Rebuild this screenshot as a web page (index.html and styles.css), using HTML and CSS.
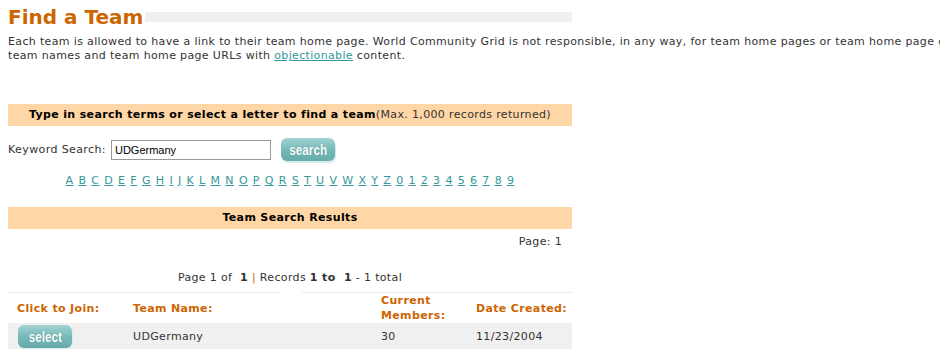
FILE: index.html
```html
<!DOCTYPE html>
<html lang="en">
<head>
  <meta charset="UTF-8">
  <title>Find a Team</title>
  <link rel="stylesheet" href="styles.css">
</head>
<body>
  <div class="page">
    <div class="title-row">
      <h1>Find a Team</h1>
      <div class="title-bar"></div>
    </div>
    <p class="intro">Each team is allowed to have a link to their team home page. World Community Grid is not responsible, in any way, for team home pages or team home page content. We reserve the right to remove<br>team names and team home page URLs with <a href="#">objectionable</a> content.</p>

    <div class="panel">
      <div class="bar"><b>Type in search terms or select a letter to find a team</b>(Max. 1,000 records returned)</div>
      <div class="search-row">
        <label for="kw">Keyword Search:</label>
        <input type="text" id="kw" value="UDGermany">
        <button class="pill"><span>search</span></button>
      </div>
      <div class="letters">
        <a href="#">A</a> <a href="#">B</a> <a href="#">C</a> <a href="#">D</a> <a href="#">E</a> <a href="#">F</a> <a href="#">G</a> <a href="#">H</a> <a href="#">I</a> <a href="#">J</a> <a href="#">K</a> <a href="#">L</a> <a href="#">M</a> <a href="#">N</a> <a href="#">O</a> <a href="#">P</a> <a href="#">Q</a> <a href="#">R</a> <a href="#">S</a> <a href="#">T</a> <a href="#">U</a> <a href="#">V</a> <a href="#">W</a> <a href="#">X</a> <a href="#">Y</a> <a href="#">Z</a> <a href="#">0</a> <a href="#">1</a> <a href="#">2</a> <a href="#">3</a> <a href="#">4</a> <a href="#">5</a> <a href="#">6</a> <a href="#">7</a> <a href="#">8</a> <a href="#">9</a>
      </div>

      <div class="bar results-bar"><b>Team Search Results</b></div>
      <div class="page-no">Page: 1</div>
      <div class="paging">Page 1 of &nbsp;<b>1</b> <span class="sep">|</span> Records <b>1 to &nbsp;1</b> - 1 total</div>
      <div class="rules"><div></div><div></div></div>

      <div class="grid head">
        <div>Click to Join:</div>
        <div>Team Name:</div>
        <div>Current<br>Members:</div>
        <div>Date Created:</div>
      </div>
      <div class="grid row">
        <div><button class="pill"><span>select</span></button></div>
        <div>UDGermany</div>
        <div>30</div>
        <div>11/23/2004</div>
      </div>
    </div>
  </div>
</body>
</html>
```

FILE: styles.css
```css
* { box-sizing: border-box; }

body {
  margin: 0;
  font-family: 'DejaVu Sans', Verdana, sans-serif;
  font-size: 11px;
  letter-spacing: 0.35px;
  color: #333;
  background: #fff;
  overflow: hidden;
}

.page {
  padding: 5px 8px 0;
  width: 1100px;
}

.title-row {
  display: flex;
  align-items: center;
  width: 564px;
  gap: 2px;
}

h1 {
  margin: 0;
  font-size: 20px;
  line-height: 24px;
  color: #cc6600;
  font-weight: bold;
  letter-spacing: 0;
}

.title-bar {
  flex: 1;
  height: 10px;
  background: #f0f0f0;
}

.intro {
  margin: 6px 0 0;
  line-height: 14px;
  white-space: nowrap;
}

a {
  color: #339999;
}

.panel {
  width: 564px;
  margin-top: 41px;
}

.bar {
  background: #ffd6a5;
  height: 22px;
  line-height: 22px;
  text-align: center;
  color: #333;
}

.bar b {
  color: #000;
}

.search-row {
  display: flex;
  align-items: center;
  height: 23px;
  margin-top: 12px;
}

.search-row label {
  margin-right: 5px;
  letter-spacing: 0.4px;
}

.search-row input {
  width: 160px;
  height: 20px;
  border: 1px solid #999;
  padding: 0 3px;
  font-family: 'Liberation Sans', Arial, sans-serif;
  font-size: 11px;
  letter-spacing: 0;
  color: #000;
  margin-right: 10px;
}

.pill {
  width: 54px;
  height: 23px;
  border: none;
  border-radius: 6px;
  background: linear-gradient(#a3d3d3, #74b7b7 55%, #68abab);
  box-shadow: 1px 2px 0 #d6ebeb;
  color: #fff;
  font-family: 'Liberation Sans', Arial, sans-serif;
  font-weight: bold;
  font-size: 15px;
  letter-spacing: 0;
  text-shadow: 0 0 1px #3c7d7d;
  padding: 0;
}

.pill span {
  display: inline-block;
  transform: scaleX(0.78);
}

.letters {
  text-align: center;
  margin-top: 13px;
  line-height: 14px;
  word-spacing: 1px;
  letter-spacing: 0.4px;
}

.results-bar {
  margin-top: 19px;
}

.page-no {
  text-align: right;
  padding-right: 10px;
  margin-top: 6px;
  line-height: 14px;
}

.paging {
  text-align: center;
  margin-top: 22px;
  line-height: 14px;
}

.paging b {
  color: #333;
}

.sep {
  color: #cc6600;
}

.rules {
  display: flex;
  gap: 21px;
  margin-top: 7px;
}

.rules div {
  height: 1px;
  background: #ececec;
}

.rules div:first-child { width: 273px; }
.rules div:last-child { flex: 1; }

.grid {
  display: grid;
  grid-template-columns: 116px 248px 95px 105px;
  align-items: center;
}

.grid > div {
  padding-left: 9px;
}

.head {
  height: 30px;
  color: #cc6600;
  font-weight: bold;
  line-height: 15px;
}

.row {
  background: #f0f0f0;
  height: 26px;
}

.row .pill {
  margin-left: 1px;
  margin-top: 1px;
}
```
